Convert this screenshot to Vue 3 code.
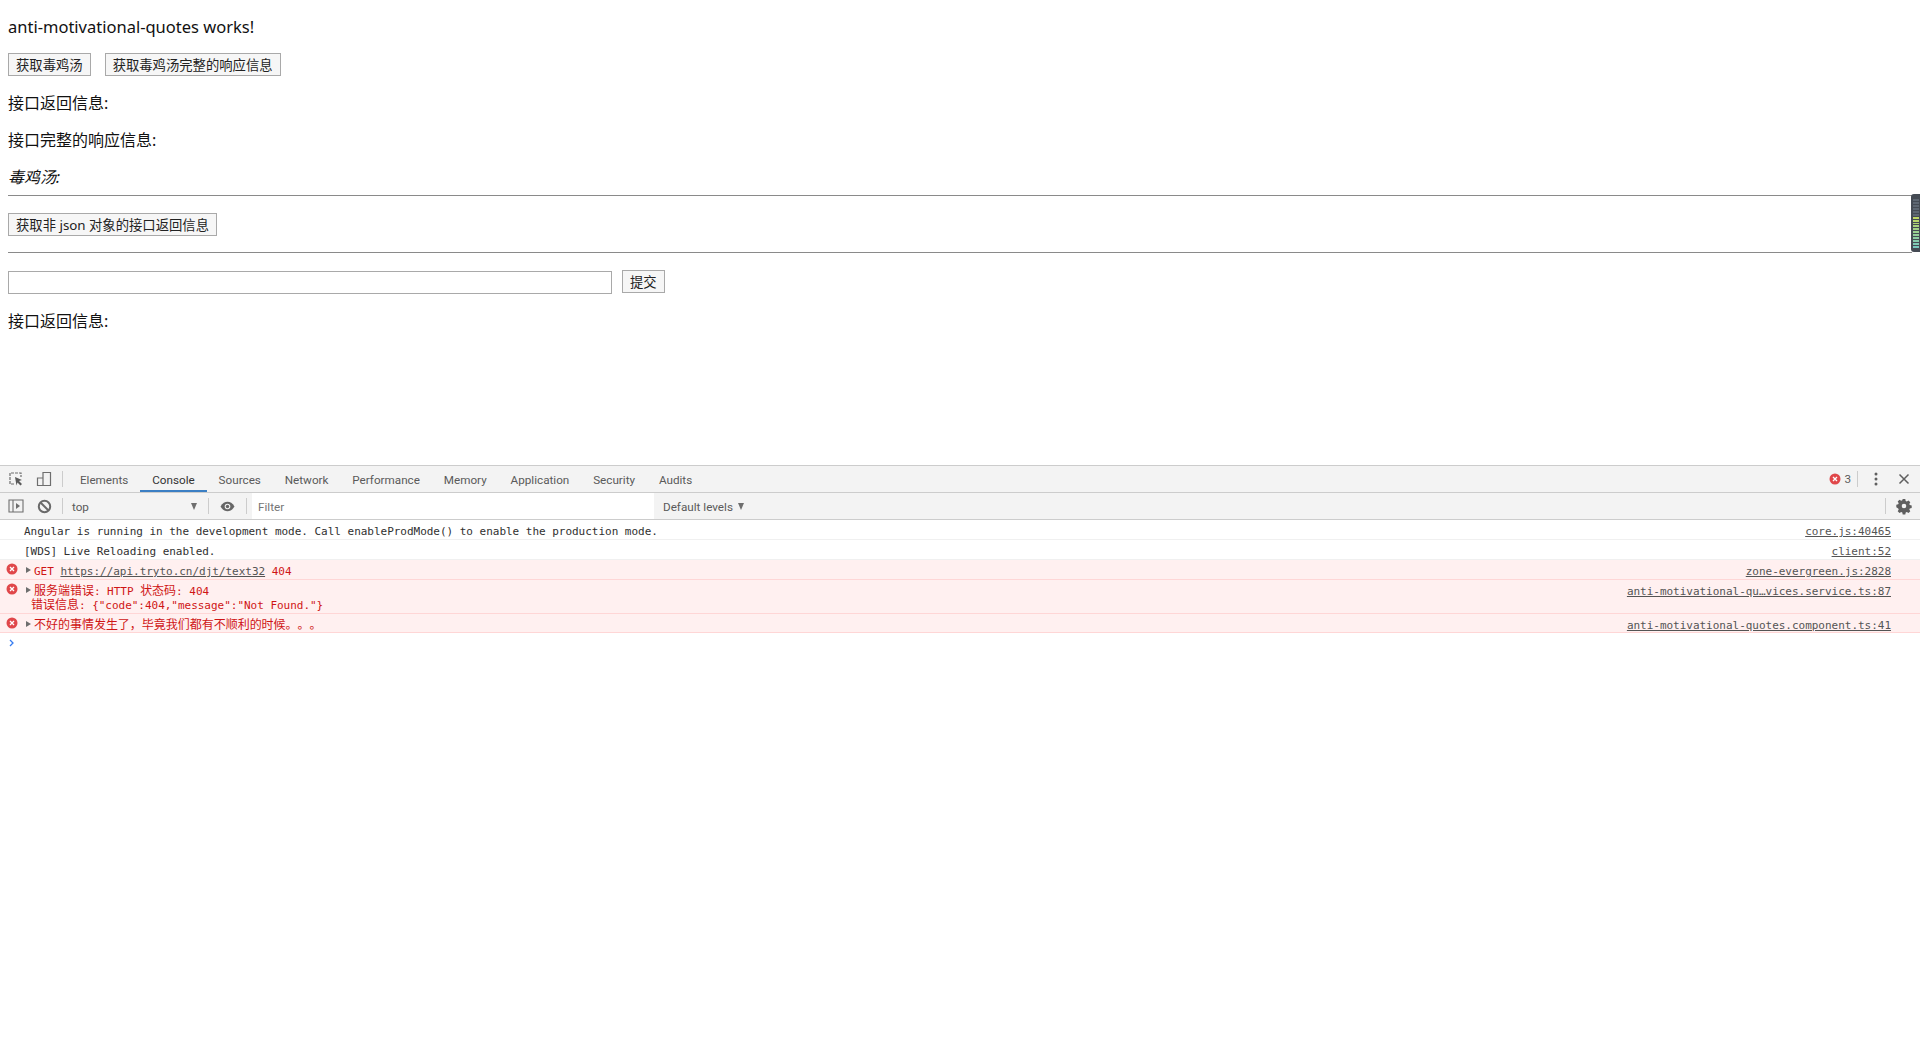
<script setup>
const tabs = ['Elements', 'Console', 'Sources', 'Network', 'Performance', 'Memory', 'Application', 'Security', 'Audits']
const bars = Array.from({ length: 17 }, (_, i) => i)
function barColor(b) {
  if (b < 6) return '#5e6772'
  const t = (b - 6) / 10
  const r = Math.round(190 - 70 * t)
  const g = Math.round(215 - 15 * t)
  const bl = Math.round(100 + 90 * t)
  return `rgb(${r}, ${g}, ${bl})`
}
</script>

<template>
  <div class="root">
    <main class="page">
      <p class="title">anti-motivational-quotes works!</p>
      <div class="btns">
        <button class="btn">获取毒鸡汤</button>
        <button class="btn">获取毒鸡汤完整的响应信息</button>
      </div>
      <p class="line first">接口返回信息:</p>
      <p class="line">接口完整的响应信息:</p>
      <p class="line em">毒鸡汤: </p>
      <hr class="rule one" />
      <div class="solo"><button class="btn">获取非 json 对象的接口返回信息</button></div>
      <hr class="rule two" />
      <form class="form" @submit.prevent>
        <input class="field" type="text" />
        <button class="btn">提交</button>
      </form>
      <p class="line last">接口返回信息:</p>
      <div class="gadget">
        <i v-for="b in bars" :key="b" :style="{ background: barColor(b) }"></i>
      </div>
    </main>

    <section class="devtools">
      <div class="bar tabsbar">
        <svg class="ic first-ic" width="16" height="16" viewBox="0 0 16 16"><path d="M6 13H2V2h11v4" fill="none" stroke="#6e6e6e" stroke-width="1.2" stroke-dasharray="3 1"/><path d="M7 6l7 3-3 1 3 3-1.500 1.500-3-3-1 3z" fill="#5a5a5a"/></svg>
        <svg class="ic dev-ic" width="16" height="16" viewBox="0 0 16 16"><path d="M7 1.500h7.500v13H7zM7 7H1.500v7.500H7" fill="none" stroke="#6e6e6e" stroke-width="1.200"/></svg>
        <span class="sep s1"></span>
        <div class="tabs">
          <span v-for="t in tabs" :key="t" class="tab" :class="{ active: t === 'Console' }">{{ t }}</span>
        </div>
        <div class="right">
          <svg width="12" height="12" viewBox="0 0 12 12"><circle cx="6" cy="6" r="5.500" fill="#e0474a"/><path d="M4 4l4 4m0-4l-4 4" stroke="#fff" stroke-width="1.300"/></svg>
          <span class="count">3</span>
          <span class="sep s2"></span>
          <svg class="kebab" width="4" height="14" viewBox="0 0 4 14"><circle cx="2" cy="2" r="1.500" fill="#5f5f5f"/><circle cx="2" cy="7" r="1.500" fill="#5f5f5f"/><circle cx="2" cy="12" r="1.500" fill="#5f5f5f"/></svg>
          <svg class="close" width="12" height="12" viewBox="0 0 12 12"><path d="M1.500 1.500l9 9m0-9l-9 9" stroke="#5f5f5f" stroke-width="1.500"/></svg>
        </div>
      </div>

      <div class="bar filterbar">
        <svg class="ic first-ic" width="16" height="16" viewBox="0 0 16 16"><path d="M1 2h14v12H1zM5 2v12" fill="none" stroke="#6e6e6e" stroke-width="1.100"/><path d="M8 5l4 3-4 3z" fill="#6e6e6e"/></svg>
        <svg class="ic stop-ic" width="15" height="15" viewBox="0 0 15 15"><circle cx="7.500" cy="7.500" r="5.700" fill="none" stroke="#6a6a6a" stroke-width="2"/><path d="M3.500 3.500l8 8" stroke="#6a6a6a" stroke-width="2"/></svg>
        <span class="sep s3"></span>
        <span class="ctx">top</span>
        <span class="caret c1"></span>
        <span class="sep s4"></span>
        <svg class="eye" width="15" height="11" viewBox="0 0 15 11"><path d="M.5 5.500C2.500 2 5 .8 7.500.8S12.500 2 14.500 5.500C12.500 9 10 10.200 7.500 10.200S2.500 9 .5 5.500z" fill="#666"/><circle cx="7.500" cy="5.500" r="2.800" fill="#f3f3f3"/><circle cx="7.500" cy="5.500" r="1.700" fill="#666"/></svg>
        <span class="sep s5"></span>
        <div class="filter"><span>Filter</span></div>
        <span class="levels">Default levels</span>
        <span class="caret c2"></span>
        <div class="right">
          <span class="sep s6"></span>
          <svg class="gear" width="14" height="14" viewBox="0 0 14 14"><path fill-rule="evenodd" fill="#5f5f5f" d="M5.700 0h2.600l.4 1.900 1.100.5 1.700-1 1.800 1.800-1 1.700.5 1.100 1.900.4v2.600l-1.900.4-.5 1.100 1 1.700-1.800 1.800-1.700-1-1.100.5-.4 1.900H5.700l-.4-1.900-1.100-.5-1.700 1-1.800-1.800 1-1.700-.5-1.100L-.7 8.300V5.700l1.900-.4.5-1.100-1-1.700 1.800-1.800 1.700 1 1.100-.5zM7 4.700a2.300 2.300 0 1 0 0 4.600 2.300 2.300 0 0 0 0-4.600z"/></svg>
        </div>
      </div>

      <div class="console">
        <div class="row">
          <span class="msg">Angular is running in the development mode. Call enableProdMode() to enable the production mode.</span>
          <a class="src">core.js:40465</a>
        </div>
        <div class="row">
          <span class="msg">[WDS] Live Reloading enabled.</span>
          <a class="src">client:52</a>
        </div>
        <div class="row err">
          <svg class="x" width="12" height="12" viewBox="0 0 12 12"><circle cx="6" cy="6" r="5.500" fill="#e0474a"/><path d="M4 4l4 4m0-4l-4 4" stroke="#fff" stroke-width="1.300"/></svg>
          <span class="tri"></span>
          <span class="msg">GET <u>https://api.tryto.cn/djt/text32</u> 404</span>
          <a class="src">zone-evergreen.js:2828</a>
        </div>
        <div class="row err tall">
          <svg class="x" width="12" height="12" viewBox="0 0 12 12"><circle cx="6" cy="6" r="5.500" fill="#e0474a"/><path d="M4 4l4 4m0-4l-4 4" stroke="#fff" stroke-width="1.300"/></svg>
          <span class="tri"></span>
          <span class="msg"><b>服务端错误</b>: HTTP <b>状态码</b>: 404<br /><span class="cont"><b>错误信息</b>: {"code":404,"message":"Not Found."}</span></span>
          <a class="src">anti-motivational-qu…vices.service.ts:87</a>
        </div>
        <div class="row err short">
          <svg class="x" width="12" height="12" viewBox="0 0 12 12"><circle cx="6" cy="6" r="5.500" fill="#e0474a"/><path d="M4 4l4 4m0-4l-4 4" stroke="#fff" stroke-width="1.300"/></svg>
          <span class="tri"></span>
          <span class="msg"><b>不好的事情发生了，毕竟我们都有不顺利的时候。。。</b></span>
          <a class="src">anti-motivational-quotes.component.ts:41</a>
        </div>
        <div class="prompt">
          <svg width="6" height="8" viewBox="0 0 6 8"><path d="M1 1l3 3-3 3" fill="none" stroke="#367cf1" stroke-width="1.300"/></svg>
        </div>
      </div>
    </section>
  </div>
</template>

<style>
html, body { margin: 0; background: #fff; overflow: hidden; }
</style>

<style scoped>
.root {
  height: 1057px;
  display: flex;
  flex-direction: column;
  font-family: "Noto Sans", "Noto Sans CJK SC", sans-serif;
  color: #111;
  text-spacing-trim: space-all;
}
.page {
  position: relative;
  height: 465px;
  box-sizing: border-box;
  padding: 16px 8px 0;
  flex: none;
}
p { margin: 0; }
.title { font-size: 16.5px; line-height: 22px; }
.btns { display: flex; gap: 14px; margin-top: 15px; }
.btn {
  height: 23px;
  box-sizing: border-box;
  padding: 1px 7px 0;
  font: 13.33px/21px "Noto Sans", "Noto Sans CJK SC", sans-serif;
  color: #222;
  background: #f6f6f6;
  border: 1px solid #a9a9a9;
  border-radius: 0;
}
.line { font-size: 16px; line-height: 22px; margin-top: 15px; }
.line.first { margin-top: 16px; }
.em { font-style: italic; }
.rule { margin: 0; border: 0; height: 1px; background: #8a8a8a; }
.rule.one { margin-top: 7px; }
.solo { margin-top: 17px; display: flex; }
.rule.two { margin-top: 16px; }
.form { display: flex; align-items: flex-start; gap: 10px; margin-top: 17px; }
.field {
  width: 604px;
  height: 23px;
  box-sizing: border-box;
  border: 1px solid #a9a9a9;
  margin: 1px 0 0;
  padding: 0;
  background: #fff;
}
.line.last { margin-top: 16px; }
.gadget {
  position: absolute;
  right: 0;
  top: 194px;
  width: 9px;
  height: 58px;
  box-sizing: border-box;
  padding: 5px 1px 4px 2px;
  background: #454b54;
  border-radius: 3px 0 0 3px;
  display: flex;
  flex-direction: column;
  gap: 1px;
}
.gadget i { display: block; flex: 1; }

.devtools {
  flex: 1;
  border-top: 1px solid #ccc;
  font-family: Roboto, "Noto Sans", sans-serif;
  font-size: 11.7px;
  color: #5a5a5a;
}
.bar {
  display: flex;
  align-items: center;
  height: 26px;
  background: #f3f3f3;
  border-bottom: 1px solid #ccc;
}
.right { margin-left: auto; display: flex; align-items: center; }
.ic { flex: none; }
.first-ic { margin-left: 8px; }
.dev-ic { margin-left: 12px; }
.stop-ic { margin-left: 13px; }
.sep { flex: none; width: 1px; height: 16px; background: #ccc; }
.s1 { margin-left: 10px; }
.tabs { display: flex; align-self: stretch; margin-left: 5px; }
.tab { padding: 2px 11.95px 0; display: flex; align-items: center; border-bottom: 2px solid transparent; border-top: 2px solid transparent; }
.tab.active { color: #333; border-bottom-color: #3b7fc4; }
.count { margin-left: 3px; }
.s2 { margin-left: 6px; }
.kebab { margin-left: 16px; }
.close { margin-left: 20px; margin-right: 10px; }
.s3 { margin-left: 10px; }
.ctx { margin-left: 9px; width: 119px; padding-top: 2px; }
.caret { flex: none; width: 0; height: 0; border-left: 3.500px solid transparent; border-right: 3.500px solid transparent; border-top: 7px solid #6e6e6e; }
.s4 { margin-left: 11px; }
.eye { margin-left: 11px; }
.s5 { margin-left: 11px; }
.filter {
  margin-left: 5px;
  width: 402px;
  align-self: stretch;
  background: #fff;
  display: flex;
  align-items: center;
  box-sizing: border-box;
  padding: 2px 0 0 6px;
  color: #757575;
}
.levels { margin-left: 9px; padding-top: 1px; }
.c2 { margin-left: 5px; }
.s6 { margin-right: 11px; }
.gear { margin-right: 9px; overflow: visible; }

.console {
  font-family: "DejaVu Sans Mono", "Noto Sans CJK SC", monospace;
  font-size: 11px;
  letter-spacing: -0.02px;
  color: #303030;
}
.row {
  position: relative;
  display: flex;
  justify-content: space-between;
  align-items: flex-start;
  height: 20px;
  box-sizing: border-box;
  padding: 5px 29px 0 24px;
  line-height: 14px;
  border-bottom: 1px solid #f0f0f0;
}
.row.err {
  background: #fff0f0;
  border-bottom-color: #ffd6d6;
  color: #cf1515;
  padding-left: 34px;
}
.row.tall { height: 34px; padding-top: 5px; }
.row.short { height: 19px; padding-top: 5px; }
.row b { font: 12px/0 "Noto Sans CJK SC", sans-serif; }
.msg { white-space: pre; line-height: 14px; }
.cont { margin-left: -3px; }
.src { color: #545454; text-decoration: underline; white-space: pre; }
u { color: #545454; }
.x { position: absolute; left: 6px; top: 3px; }
.tri {
  position: absolute;
  left: 26px;
  top: 7px;
  width: 0;
  height: 0;
  border-top: 3.500px solid transparent;
  border-bottom: 3.500px solid transparent;
  border-left: 5px solid #6e6e6e;
}
.prompt { padding: 6px 0 0 9px; line-height: 0; }
</style>
